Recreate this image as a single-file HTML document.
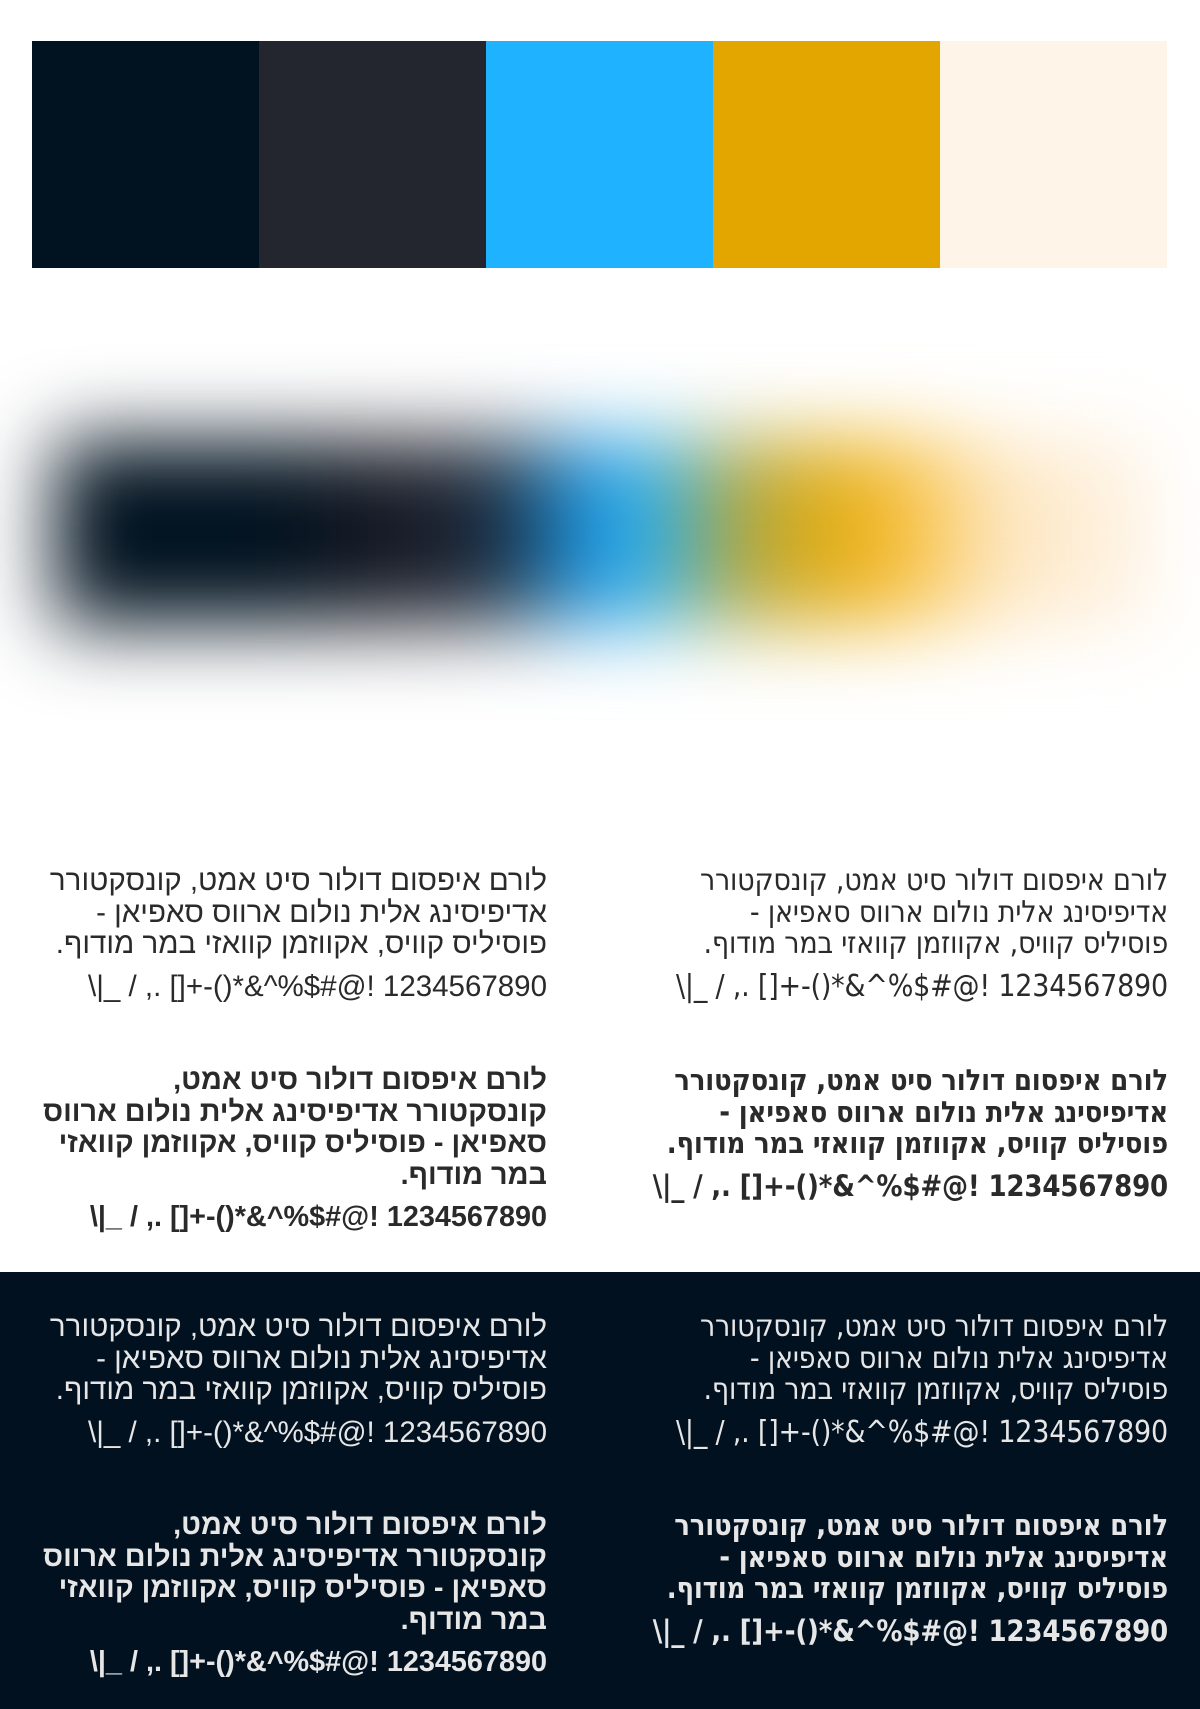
<!DOCTYPE html>
<html><head><meta charset="utf-8"><style>
html,body{margin:0;padding:0;width:1200px;height:1709px;background:#fff;overflow:hidden;position:relative}
.sw{position:absolute;top:41px;height:227px;width:227.2px}
.blur{position:absolute;left:55px;width:1100px;top:440px;height:185px;filter:blur(40px);
background:linear-gradient(to right,#011220 0px,#011220 220px,#1a1a24 340px,#1c2a3c 440px,#1fa0ee 540px,#2ab0f0 590px,#b5a83a 690px,#eaae10 790px,#f8c040 850px,#fde6c0 940px,#fef4e8 1100px)}
.dark{position:absolute;left:0;top:1272px;width:1200px;height:437px;background:#011120}
.t{position:absolute;direction:rtl;text-align:right;width:560px;line-height:31.6px;white-space:nowrap}
.t .n{margin-top:11px;direction:ltr;text-align:right}
.r{right:32px;font-family:"DejaVu Sans Condensed","DejaVu Sans",sans-serif;font-size:30px;font-weight:300;letter-spacing:-0.2px;font-stretch:condensed}
.r.b{font-size:29px}
.l{right:653px;font-family:"Liberation Sans",sans-serif;font-size:29.5px}
.l.b{font-size:28.8px}
.b{font-weight:bold}
.lt{color:#2a2a2a}.dk{color:#e6e6e6}
</style></head><body>
<div class="sw" style="left:32px;background:#011220"></div>
<div class="sw" style="left:259px;background:#23262f"></div>
<div class="sw" style="left:486px;background:#1fb3ff"></div>
<div class="sw" style="left:713px;background:#e3a500"></div>
<div class="sw" style="left:940px;background:#fef4e8"></div>

<div class="blur"></div>

<div class="dark"></div>

<div class="t r lt" style="top:865px">לורם איפסום דולור סיט אמט, קונסקטורר<br>אדיפיסינג אלית נולום ארווס סאפיאן -<br>פוסיליס קוויס, אקווזמן קוואזי במר מודוף.<div class="n">\|_ / ,. []+-()*&amp;^%$#@! 1234567890</div></div>
<div class="t l lt" style="top:865px">לורם איפסום דולור סיט אמט, קונסקטורר<br>אדיפיסינג אלית נולום ארווס סאפיאן -<br>פוסיליס קוויס, אקווזמן קוואזי במר מודוף.<div class="n">\|_ / ,. []+-()*&amp;^%$#@! 1234567890</div></div>

<div class="t r b lt" style="top:1065px">לורם איפסום דולור סיט אמט, קונסקטורר<br>אדיפיסינג אלית נולום ארווס סאפיאן -<br>פוסיליס קוויס, אקווזמן קוואזי במר מודוף.<div class="n">\|_ / ,. []+-()*&amp;^%$#@! 1234567890</div></div>
<div class="t l b lt" style="top:1065px">לורם איפסום דולור סיט אמט,<br>קונסקטורר אדיפיסינג אלית נולום ארווס<br>סאפיאן - פוסיליס קוויס, אקווזמן קוואזי<br>במר מודוף.<div class="n">\|_ / ,. []+-()*&amp;^%$#@! 1234567890</div></div>

<div class="t r dk" style="top:1311px">לורם איפסום דולור סיט אמט, קונסקטורר<br>אדיפיסינג אלית נולום ארווס סאפיאן -<br>פוסיליס קוויס, אקווזמן קוואזי במר מודוף.<div class="n">\|_ / ,. []+-()*&amp;^%$#@! 1234567890</div></div>
<div class="t l dk" style="top:1311px">לורם איפסום דולור סיט אמט, קונסקטורר<br>אדיפיסינג אלית נולום ארווס סאפיאן -<br>פוסיליס קוויס, אקווזמן קוואזי במר מודוף.<div class="n">\|_ / ,. []+-()*&amp;^%$#@! 1234567890</div></div>

<div class="t r b dk" style="top:1510px">לורם איפסום דולור סיט אמט, קונסקטורר<br>אדיפיסינג אלית נולום ארווס סאפיאן -<br>פוסיליס קוויס, אקווזמן קוואזי במר מודוף.<div class="n">\|_ / ,. []+-()*&amp;^%$#@! 1234567890</div></div>
<div class="t l b dk" style="top:1510px">לורם איפסום דולור סיט אמט,<br>קונסקטורר אדיפיסינג אלית נולום ארווס<br>סאפיאן - פוסיליס קוויס, אקווזמן קוואזי<br>במר מודוף.<div class="n">\|_ / ,. []+-()*&amp;^%$#@! 1234567890</div></div>
</body></html>
